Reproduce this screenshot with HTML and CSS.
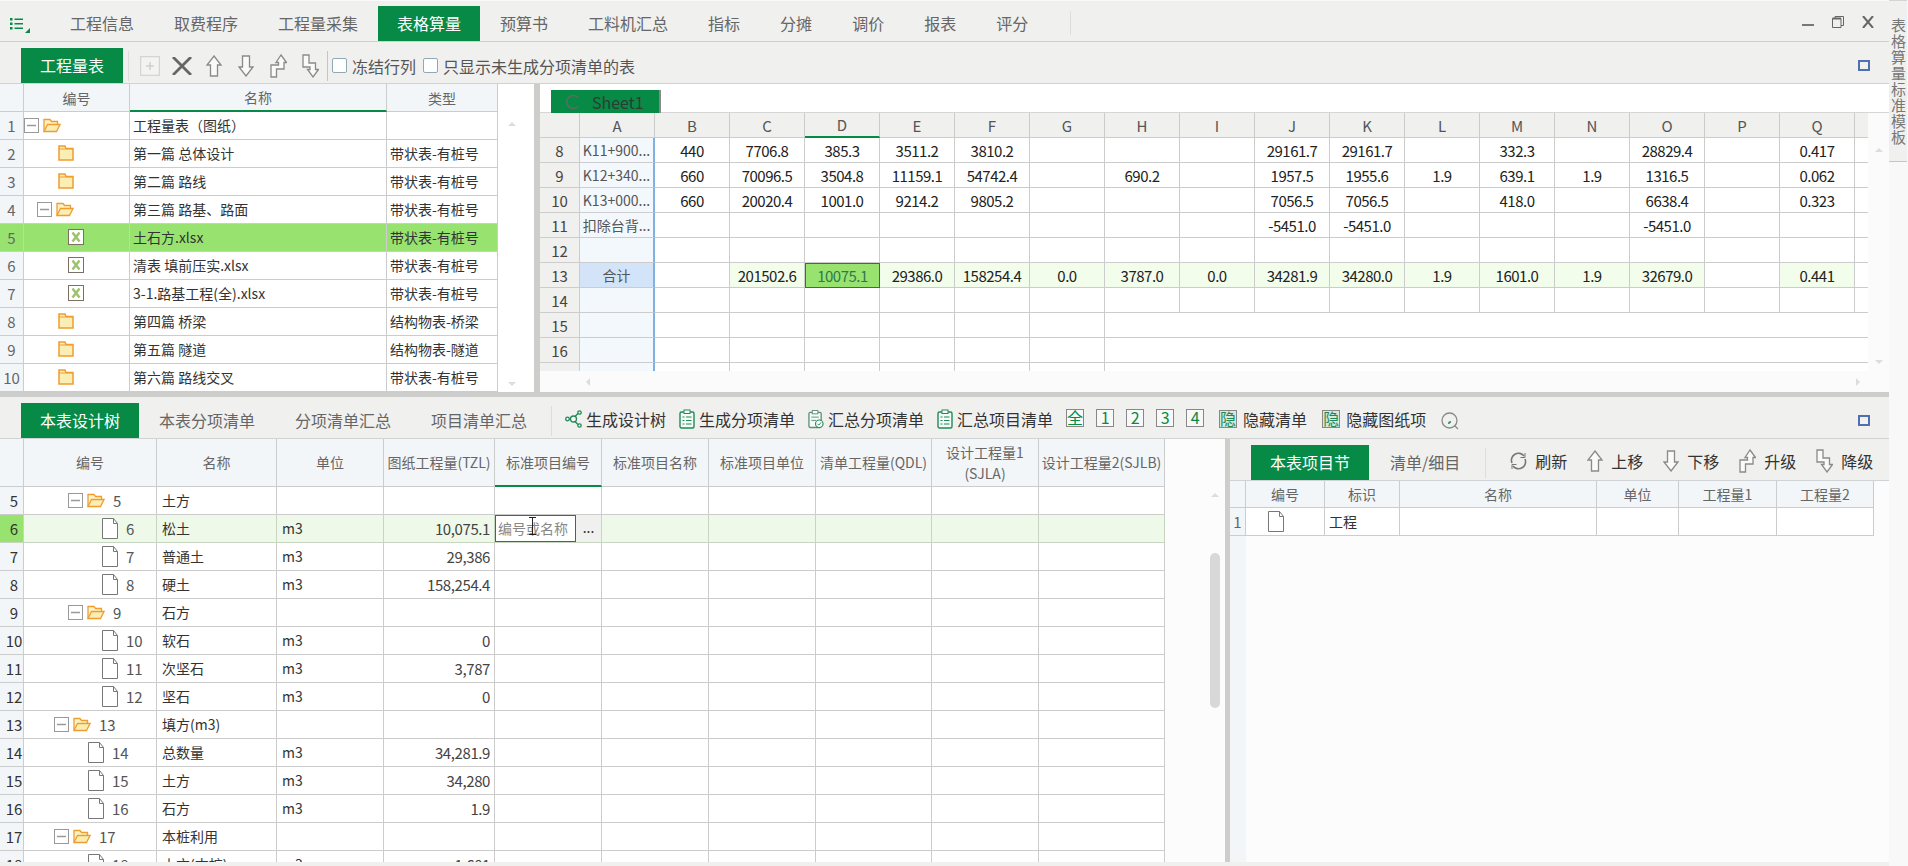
FILE: index.html
```html
<!DOCTYPE html>
<html lang="zh-CN">
<head>
    <meta charset="UTF-8">
    <title>表格算量</title>
    <link rel="stylesheet" href="styles.css">
</head>
<body>
<svg class="defs" width="0" height="0">
    <symbol id="minus" viewBox="0 0 15 15"><rect x=".5" y=".5" width="14" height="14" fill="#fff" stroke="#999"/><path d="M3 7.5h9" stroke="#999" stroke-width="1.5"/></symbol>
    <symbol id="open" viewBox="0 0 18 16"><path d="M1 14.5V2.5h6l1.500 2h6v3" fill="#fdf3c8" stroke="#ef9d2f" stroke-width="1.300"/><path d="M1 14.500l3.500-7H17l-3.500 7z" fill="#fbeeb5" stroke="#ef9d2f" stroke-width="1.300"/></symbol>
    <symbol id="closed" viewBox="0 0 16 16"><path d="M1 15V1h6l1 2.500h7V15z" fill="#fbeeb5" stroke="#ef9d2f" stroke-width="1.500"/><path d="M1 4h14" stroke="#ef9d2f"/></symbol>
    <symbol id="xl" viewBox="0 0 16 16"><rect x=".5" y=".5" width="15" height="15" fill="#fff" stroke="#7d6f66"/><path d="M4.500 3.500l7 9M11.500 3.500l-7 9" stroke="#9cc26a" stroke-width="2.400"/></symbol>
    <symbol id="doc" viewBox="0 0 16 21"><path d="M.5.500h11l4 5v15H.5z" fill="#fff" stroke="#777"/><path d="M11.500.500v5h4" fill="none" stroke="#777"/></symbol>
    <symbol id="up" viewBox="0 0 16 22"><path d="M8 1l7 9h-3.500v11h-7V10H1z" fill="#fafafa" stroke="#8a8a8a" stroke-width="1.300"/></symbol>
    <symbol id="down" viewBox="0 0 16 22"><path d="M8 21l7-9h-3.500V1h-7v11H1z" fill="#fafafa" stroke="#8a8a8a" stroke-width="1.300"/></symbol>
    <symbol id="rise" viewBox="0 0 17 24"><path d="M11 1l5.500 7.500H14V15H6.500v8H1V11h7.500V8.500H6z" fill="#fafafa" stroke="#8a8a8a" stroke-width="1.300"/></symbol>
    <symbol id="fall" viewBox="0 0 17 24"><path d="M1 1h6v8h6.500v6.500h3L11 23l-5.500-7.500H8V13H1z" fill="#fafafa" stroke="#8a8a8a" stroke-width="1.300"/></symbol>
    <symbol id="list" viewBox="0 0 16 20"><rect x="1" y="3" width="14" height="16" rx="1.500" fill="#f6faf7" stroke="#1f8a57" stroke-width="1.400"/><rect x="5" y="1" width="6" height="3.500" fill="#fff" stroke="#1f8a57"/><path d="M3.500 8h2M7 8h5.500M3.500 11.500h2M7 11.500h5.500M3.500 15h2M7 15h5.500" stroke="#1f8a57"/></symbol>
    <symbol id="sumlist" viewBox="0 0 17 20"><rect x="1" y="3" width="13" height="16" rx="1.500" fill="#f6faf7" stroke="#5d8f78" stroke-width="1.400"/><rect x="4.500" y="1" width="6" height="3.500" fill="#fff" stroke="#5d8f78"/><path d="M3.500 8h8M3.500 11.500h5" stroke="#5d8f78"/><circle cx="12" cy="15" r="4" fill="#fff" stroke="#1f8a57" stroke-width="1.200"/><path d="M10 15l1.500 1.500 2.500-3" fill="none" stroke="#1f8a57"/></symbol>
</svg>

<div class="app">
    <div class="main">
        <div class="topbar">
            <svg class="menu-icon" width="20" height="16" viewBox="0 0 20 16"><path d="M0 1h2.500v2.500H0zM0 5.500h2.500V8H0zM0 10h2.500v2.500H0zM4.500 1.500H13v1.500H4.500zM4.500 6H13v1.500H4.500zM4.500 10.500H13V12H4.500z" fill="#068a45"/><path d="M20 11v5h-5z" fill="#068a45"/></svg>
            <div class="tabs">
                <span class="tab">工程信息</span>
                <span class="tab">取费程序</span>
                <span class="tab">工程量采集</span>
                <span class="tab active">表格算量</span>
                <span class="tab">预算书</span>
                <span class="tab">工料机汇总</span>
                <span class="tab">指标</span>
                <span class="tab">分摊</span>
                <span class="tab">调价</span>
                <span class="tab">报表</span>
                <span class="tab">评分</span>
            </div>
            <span class="vline top-sep"></span>
            <div class="win">
                <svg width="12" height="12" viewBox="0 0 12 12"><path d="M0 9h12" stroke="#777" stroke-width="2"/></svg>
                <svg width="12" height="12" viewBox="0 0 12 12"><path d="M.5 2.500h8.500v9H.5zM3 2.500V.5h8.500v9H9" fill="none" stroke="#666"/><path d="M.5 2.500H9" stroke="#666" stroke-width="2"/></svg>
                <svg width="12" height="12" viewBox="0 0 12 12"><path d="M1 0l10 12M11 0L1 12" stroke="#666" stroke-width="2"/></svg>
            </div>
        </div>

        <div class="toolbar">
            <span class="tab active solo">工程量表</span>
            <span class="vline sep-a"></span>
            <svg class="ic-add" width="20" height="20" viewBox="0 0 20 20"><rect x=".5" y=".5" width="19" height="19" fill="#f3f3f2" stroke="#d4d4d4" stroke-width="1.500"/><path d="M10 6v8M6 10h8" stroke="#d0d0d0" stroke-width="1.500"/></svg>
            <svg class="ic-del" width="20" height="18" viewBox="0 0 20 18"><path d="M1 0l18 18M19 0L1 18" stroke="#666" stroke-width="2.800"/></svg>
            <svg class="ic-a" width="16" height="22"><use href="#up"/></svg>
            <svg class="ic-b" width="16" height="22"><use href="#down"/></svg>
            <svg class="ic-b" width="17" height="24"><use href="#rise"/></svg>
            <svg class="ic-c" width="17" height="24"><use href="#fall"/></svg>
            <span class="vline sep-b"></span>
            <label class="check first"><input type="checkbox">冻结行列</label>
            <label class="check"><input type="checkbox">只显示未生成分项清单的表</label>
            <span class="max-btn"></span>
        </div>

        <div class="upper">
            <div class="pane-list">
                <table class="grid list-grid">
                    <colgroup><col class="w24"><col class="w106"><col class="w257"><col class="w111"></colgroup>
                    <tr class="head"><th></th><th>编号</th><th class="sorted">名称</th><th>类型</th></tr>
                    <tr><td class="num">1</td><td><div class="node p1"><svg width="15" height="15"><use href="#minus"/></svg><svg width="18" height="16"><use href="#open"/></svg></div></td><td>工程量表（图纸）</td><td></td></tr>
                    <tr><td class="num">2</td><td><div class="node p35"><svg width="16" height="16"><use href="#closed"/></svg></div></td><td>第一篇 总体设计</td><td>带状表-有桩号</td></tr>
                    <tr><td class="num">3</td><td><div class="node p35"><svg width="16" height="16"><use href="#closed"/></svg></div></td><td>第二篇 路线</td><td>带状表-有桩号</td></tr>
                    <tr><td class="num">4</td><td><div class="node p14"><svg width="15" height="15"><use href="#minus"/></svg><svg width="18" height="16"><use href="#open"/></svg></div></td><td>第三篇 路基、路面</td><td>带状表-有桩号</td></tr>
                    <tr class="picked"><td class="num">5</td><td><div class="node p45"><svg width="16" height="16"><use href="#xl"/></svg></div></td><td>土石方.xlsx</td><td>带状表-有桩号</td></tr>
                    <tr><td class="num">6</td><td><div class="node p45"><svg width="16" height="16"><use href="#xl"/></svg></div></td><td>清表 填前压实.xlsx</td><td>带状表-有桩号</td></tr>
                    <tr><td class="num">7</td><td><div class="node p45"><svg width="16" height="16"><use href="#xl"/></svg></div></td><td>3-1.路基工程(全).xlsx</td><td>带状表-有桩号</td></tr>
                    <tr><td class="num">8</td><td><div class="node p35"><svg width="16" height="16"><use href="#closed"/></svg></div></td><td>第四篇 桥梁</td><td>结构物表-桥梁</td></tr>
                    <tr><td class="num">9</td><td><div class="node p35"><svg width="16" height="16"><use href="#closed"/></svg></div></td><td>第五篇 隧道</td><td>结构物表-隧道</td></tr>
                    <tr><td class="num">10</td><td><div class="node p35"><svg width="16" height="16"><use href="#closed"/></svg></div></td><td>第六篇 路线交叉</td><td>带状表-有桩号</td></tr>
                </table>
                <div class="vscroll list-scroll"><i class="arrow-up"></i><i class="arrow-down"></i></div>
            </div>

            <div class="pane-sheet">
                <div class="sheet-tabs">
                    <span class="sheet-tab"><svg width="14" height="16" viewBox="0 0 14 16"><path d="M12 3.500A6.500 6.500 0 1 0 12 12.500" fill="none" stroke="#5a6e62" stroke-width="1.500"/></svg>Sheet1</span>
                </div>
                <div class="sheet-body">
                    <div class="sheet-view">
                        <div class="sheet-clip">
                            <table class="grid sheet">
                                <colgroup><col class="w40"><col class="w75"><col class="w75"><col class="w75"><col class="w75"><col class="w75"><col class="w75"><col class="w75"><col class="w75"><col class="w75"><col class="w75"><col class="w75"><col class="w75"><col class="w75"><col class="w75"><col class="w75"><col class="w75"><col class="w75"><col class="w13"></colgroup>
                                <tr class="head"><th></th><th>A</th><th>B</th><th>C</th><th class="sorted">D</th><th>E</th><th>F</th><th>G</th><th>H</th><th>I</th><th>J</th><th>K</th><th>L</th><th>M</th><th>N</th><th>O</th><th>P</th><th>Q</th><th class="edge"></th></tr>
                                <tr><td class="num">8</td><td class="fix">K11+900...</td><td>440</td><td>7706.8</td><td>385.3</td><td>3511.2</td><td>3810.2</td><td></td><td></td><td></td><td>29161.7</td><td>29161.7</td><td></td><td>332.3</td><td></td><td>28829.4</td><td></td><td>0.417</td><td class="edge"></td></tr>
                                <tr><td class="num">9</td><td class="fix">K12+340...</td><td>660</td><td>70096.5</td><td>3504.8</td><td>11159.1</td><td>54742.4</td><td></td><td>690.2</td><td></td><td>1957.5</td><td>1955.6</td><td>1.9</td><td>639.1</td><td>1.9</td><td>1316.5</td><td></td><td>0.062</td><td class="edge"></td></tr>
                                <tr><td class="num">10</td><td class="fix">K13+000...</td><td>660</td><td>20020.4</td><td>1001.0</td><td>9214.2</td><td>9805.2</td><td></td><td></td><td></td><td>7056.5</td><td>7056.5</td><td></td><td>418.0</td><td></td><td>6638.4</td><td></td><td>0.323</td><td class="edge"></td></tr>
                                <tr><td class="num">11</td><td class="fix">扣除台背...</td><td></td><td></td><td></td><td></td><td></td><td></td><td></td><td></td><td>-5451.0</td><td>-5451.0</td><td></td><td></td><td></td><td>-5451.0</td><td></td><td></td><td class="edge"></td></tr>
                                <tr><td class="num">12</td><td class="fix"></td><td></td><td></td><td></td><td></td><td></td><td></td><td></td><td></td><td></td><td></td><td></td><td></td><td></td><td></td><td></td><td></td><td class="edge"></td></tr>
                                <tr class="total"><td class="num">13</td><td class="fix sum">合计</td><td class="blank"></td><td>201502.6</td><td class="cur">10075.1</td><td>29386.0</td><td>158254.4</td><td>0.0</td><td>3787.0</td><td>0.0</td><td>34281.9</td><td>34280.0</td><td>1.9</td><td>1601.0</td><td>1.9</td><td>32679.0</td><td class="blank"></td><td>0.441</td><td class="blank edge"></td></tr>
                                <tr><td class="num">14</td><td class="fix"></td><td></td><td></td><td></td><td></td><td></td><td></td><td></td><td></td><td></td><td></td><td></td><td></td><td></td><td></td><td></td><td></td><td class="edge"></td></tr>
                                <tr><td class="num">15</td><td class="fix"></td><td></td><td></td><td></td><td></td><td></td><td></td><td class="edge" colspan="11"></td></tr>
                                <tr><td class="num">16</td><td class="fix"></td><td></td><td></td><td></td><td></td><td></td><td></td><td class="edge" colspan="11"></td></tr>
                                <tr><td class="num"></td><td class="fix"></td><td></td><td></td><td></td><td></td><td></td><td></td><td class="edge" colspan="11"></td></tr>
                            </table>
                        </div>
                        <div class="hscroll"><i class="arrow-left"></i><i class="arrow-right"></i></div>
                    </div>
                    <div class="vscroll sheet-scroll"><i class="arrow-up"></i><i class="arrow-down"></i></div>
                </div>
            </div>
        </div>

        <div class="lower">
            <div class="toolbar lower-bar">
                <span class="tab active solo wide">本表设计树</span>
                <span class="tab">本表分项清单</span>
                <span class="tab">分项清单汇总</span>
                <span class="tab">项目清单汇总</span>
                <span class="vline sep-c"></span>
                <span class="tool"><svg width="17" height="18" viewBox="0 0 17 18"><g fill="#f6faf7" stroke="#1f8a57" stroke-width="1.300"><path d="M4 9h4M10 6.500l3-3M10 11.500l3 3" fill="none"/><circle cx="2.500" cy="9" r="1.800"/><circle cx="8.500" cy="9" r="3"/><circle cx="14.500" cy="2.500" r="1.700"/><circle cx="14.500" cy="15.500" r="1.700"/></g></svg>生成设计树</span>
                <span class="tool"><svg width="16" height="20"><use href="#list"/></svg>生成分项清单</span>
                <span class="tool"><svg width="16" height="20"><use href="#sumlist"/></svg>汇总分项清单</span>
                <span class="tool"><svg width="16" height="20"><use href="#list"/></svg>汇总项目清单</span>
                <span class="lvl first-lvl">全</span><span class="lvl">1</span><span class="lvl">2</span><span class="lvl">3</span><span class="lvl">4</span>
                <span class="tool hide-tool"><span class="lvl hid">隐</span>隐藏清单</span>
                <span class="tool hide-tool"><span class="lvl hid">隐</span>隐藏图纸项</span>
                <svg class="ic-find" width="18" height="18" viewBox="0 0 18 18"><circle cx="8.500" cy="8.500" r="7.500" fill="none" stroke="#8a8a8a" stroke-width="1.300"/><path d="M13.500 13.500l3.500 3.500" stroke="#8a8a8a" stroke-width="1.300"/><path d="M7 12c2 0 3-1 3-3-2 0-3 1-3 3z" fill="#1f8a57"/></svg>
                <span class="max-btn"></span>
            </div>
            <div class="lower-body">
                <div class="pane-tree">
                    <div class="tree-clip">
                        <table class="grid tree">
                            <colgroup><col class="w24"><col class="w133"><col class="w120"><col class="w107"><col class="w111"><col class="w107"><col class="w107"><col class="w107"><col class="w116"><col class="w107"><col class="w126"></colgroup>
                            <tr class="head tall"><th></th><th>编号</th><th>名称</th><th>单位</th><th>图纸工程量(TZL)</th><th class="sorted">标准项目编号</th><th>标准项目名称</th><th>标准项目单位</th><th>清单工程量(QDL)</th><th>设计工程量1<br>(SJLA)</th><th>设计工程量2(SJLB)</th></tr>
                            <tr><td class="num">5</td><td><div class="node p43"><svg width="15" height="15"><use href="#minus"/></svg><svg width="18" height="16"><use href="#open"/></svg><b>5</b></div></td><td>土方</td><td></td><td></td><td></td><td></td><td></td><td></td><td></td><td></td></tr>
                            <tr class="editing"><td class="num">6</td><td><div class="node p77"><svg width="16" height="21"><use href="#doc"/></svg><b>6</b></div></td><td>松土</td><td>m3</td><td class="val">10,075.1</td><td class="edit-cell"><div class="editor"><span class="placeholder">编号或名称</span><span class="dots">...</span><svg class="ibeam" width="7" height="18" viewBox="0 0 7 18"><path d="M0 .5h7M0 17.500h7M3.500 0v18" stroke="#222"/></svg></div></td><td></td><td></td><td></td><td></td><td></td></tr>
                            <tr><td class="num">7</td><td><div class="node p77"><svg width="16" height="21"><use href="#doc"/></svg><b>7</b></div></td><td>普通土</td><td>m3</td><td class="val">29,386</td><td></td><td></td><td></td><td></td><td></td><td></td></tr>
                            <tr><td class="num">8</td><td><div class="node p77"><svg width="16" height="21"><use href="#doc"/></svg><b>8</b></div></td><td>硬土</td><td>m3</td><td class="val">158,254.4</td><td></td><td></td><td></td><td></td><td></td><td></td></tr>
                            <tr><td class="num">9</td><td><div class="node p43"><svg width="15" height="15"><use href="#minus"/></svg><svg width="18" height="16"><use href="#open"/></svg><b>9</b></div></td><td>石方</td><td></td><td></td><td></td><td></td><td></td><td></td><td></td><td></td></tr>
                            <tr><td class="num">10</td><td><div class="node p77"><svg width="16" height="21"><use href="#doc"/></svg><b>10</b></div></td><td>软石</td><td>m3</td><td class="val">0</td><td></td><td></td><td></td><td></td><td></td><td></td></tr>
                            <tr><td class="num">11</td><td><div class="node p77"><svg width="16" height="21"><use href="#doc"/></svg><b>11</b></div></td><td>次坚石</td><td>m3</td><td class="val">3,787</td><td></td><td></td><td></td><td></td><td></td><td></td></tr>
                            <tr><td class="num">12</td><td><div class="node p77"><svg width="16" height="21"><use href="#doc"/></svg><b>12</b></div></td><td>坚石</td><td>m3</td><td class="val">0</td><td></td><td></td><td></td><td></td><td></td><td></td></tr>
                            <tr><td class="num">13</td><td><div class="node p29"><svg width="15" height="15"><use href="#minus"/></svg><svg width="18" height="16"><use href="#open"/></svg><b>13</b></div></td><td>填方(m3)</td><td></td><td></td><td></td><td></td><td></td><td></td><td></td><td></td></tr>
                            <tr><td class="num">14</td><td><div class="node p63"><svg width="16" height="21"><use href="#doc"/></svg><b>14</b></div></td><td>总数量</td><td>m3</td><td class="val">34,281.9</td><td></td><td></td><td></td><td></td><td></td><td></td></tr>
                            <tr><td class="num">15</td><td><div class="node p63"><svg width="16" height="21"><use href="#doc"/></svg><b>15</b></div></td><td>土方</td><td>m3</td><td class="val">34,280</td><td></td><td></td><td></td><td></td><td></td><td></td></tr>
                            <tr><td class="num">16</td><td><div class="node p63"><svg width="16" height="21"><use href="#doc"/></svg><b>16</b></div></td><td>石方</td><td>m3</td><td class="val">1.9</td><td></td><td></td><td></td><td></td><td></td><td></td></tr>
                            <tr><td class="num">17</td><td><div class="node p29"><svg width="15" height="15"><use href="#minus"/></svg><svg width="18" height="16"><use href="#open"/></svg><b>17</b></div></td><td>本桩利用</td><td></td><td></td><td></td><td></td><td></td><td></td><td></td><td></td></tr>
                            <tr><td class="num">18</td><td><div class="node p63"><svg width="16" height="21"><use href="#doc"/></svg><b>18</b></div></td><td>土方(本桩)</td><td>m3</td><td class="val">1,601</td><td></td><td></td><td></td><td></td><td></td><td></td></tr>
                        </table>
                    </div>
                    <div class="vscroll tree-scroll"><i class="arrow-up"></i><i class="thumb"></i></div>
                </div>
                <div class="pane-items">
                    <div class="toolbar items-bar">
                        <span class="tab active solo wide">本表项目节</span>
                        <span class="tab plain">清单/细目</span>
                        <span class="vline sep-d"></span>
                        <span class="tool wide-gap"><svg width="17" height="18" viewBox="0 0 17 18"><path d="M2 11A7 7 0 0 1 14 4M15 7a7 7 0 0 1-12 7" fill="none" stroke="#777" stroke-width="1.600"/><path d="M15 1v4.500h-4.500M2 17v-4.500h4.500" fill="none" stroke="#777"/></svg>刷新</span>
                        <span class="tool wide-gap"><svg width="16" height="22"><use href="#up"/></svg>上移</span>
                        <span class="tool wide-gap"><svg width="16" height="22"><use href="#down"/></svg>下移</span>
                        <span class="tool wide-gap"><svg width="17" height="24"><use href="#rise"/></svg>升级</span>
                        <span class="tool wide-gap"><svg width="17" height="24"><use href="#fall"/></svg>降级</span>
                    </div>
                    <table class="grid items">
                        <colgroup><col class="w16"><col class="w79"><col class="w75"><col class="w197"><col class="w82"><col class="w98"><col class="w97"></colgroup>
                        <tr class="head"><th></th><th>编号</th><th>标识</th><th>名称</th><th>单位</th><th>工程量1</th><th>工程量2</th></tr>
                        <tr><td class="num">1</td><td><div class="node p37"><svg width="16" height="21"><use href="#doc"/></svg></div></td><td>工程</td><td></td><td></td><td></td><td></td></tr>
                    </table>
                    <div class="items-fill"></div>
                </div>
            </div>
        </div>
    </div>
    <div class="side"><div class="side-tab">表格算量标准模板</div></div>
</div>
</body>
</html>
```

FILE: styles.css
```css
* {
    box-sizing: border-box;
}

html, body {
    margin: 0;
    padding: 0;
}

body {
    width: 1908px;
    height: 866px;
    overflow: hidden;
    font-family: "Noto Sans CJK SC", "Noto Sans", sans-serif;
    font-size: 14px;
    color: #333;
    background-color: #f0f0ee;
}

.defs {
    position: absolute;
}

.app {
    display: flex;
    height: 866px;
}

.main {
    width: 1889px;
    display: flex;
    flex-direction: column;
}

svg {
    flex: none;
    display: block;
}

/* top menu */
.topbar {
    height: 42px;
    display: flex;
    align-items: flex-end;
    border-bottom: 1px solid #cfcfcf;
    border-top: 1px solid #fafafa;
    padding-left: 10px;
}

.menu-icon {
    margin-bottom: 8px;
}

.tabs {
    display: flex;
    margin-left: 20px;
}

.tab {
    height: 35px;
    line-height: 34px;
    padding: 0 20px;
    font-size: 16px;
    color: #666;
    white-space: nowrap;
}

.tab.active {
    background-color: #068a45;
    color: #fff;
    padding: 0 19px;
}

.tab.solo {
    width: 102px;
}

.tab.wide {
    width: 118px;
    text-align: center;
    padding: 0;
}

.vline {
    width: 1px;
    background-color: #ddd;
    flex: none;
}

.top-sep {
    height: 24px;
    margin: 0 0 6px 22px;
}

.win {
    margin-left: auto;
    margin-right: 15px;
    margin-bottom: 13px;
    display: flex;
    gap: 18px;
}

/* toolbars */
.toolbar {
    height: 42px;
    flex: none;
    display: flex;
    align-items: flex-end;
    padding-left: 21px;
    border-bottom: 1px solid #cfd3d6;
}

.toolbar > svg, .toolbar > .vline, .toolbar > .check {
    align-self: center;
}

.toolbar > svg {
    margin-top: 6px;
}

.sep-a {
    height: 30px;
    margin: 6px 11px 0 5px;
}

.ic-del {
    margin-left: 12px;
}

.ic-a {
    margin-left: 14px;
}

.ic-b {
    margin-left: 16px;
}

.ic-c {
    margin-left: 15px;
}

.sep-b {
    height: 30px;
    margin: 6px 4px 0 8px;
    background-color: #b9c9d3;
}

.check {
    display: flex;
    align-items: center;
    gap: 5px;
    font-size: 16px;
    color: #555;
    margin-left: 7px;
    margin-top: 6px;
    white-space: nowrap;
}

.check.first {
    margin-left: 0;
}

.check input {
    appearance: none;
    width: 15px;
    height: 15px;
    margin: 0;
    background: #fff;
    border: 1px solid #8fa9b5;
    border-radius: 2px;
}

.max-btn {
    width: 12px;
    height: 11px;
    border: 2px solid #4f6fb0;
    margin-left: auto;
    margin-right: 19px;
    align-self: center;
    flex: none;
    margin-top: 6px;
}

/* tables */
.grid {
    border-collapse: separate;
    border-spacing: 0;
    table-layout: fixed;
    background-color: #fff;
}

.grid th, .grid td {
    height: 28px;
    padding: 0 4px 1px;
    border-right: 1px solid #ccc;
    border-bottom: 1px solid #ccc;
    font-weight: normal;
    white-space: nowrap;
    overflow: hidden;
}

.grid th {
    background-color: #f3f6f9;
    color: #666;
    text-align: center;
    padding: 0;
}

.grid th.sorted {
    border-bottom: 2px solid #068a45;
}

.grid td.num {
    background-color: #f3f6f9;
    color: #666;
    text-align: center;
    font-size: 15px;
    padding: 0;
}

.w13 { width: 13px; }
.w16 { width: 16px; }
.w24 { width: 24px; }
.w40 { width: 40px; }
.w75 { width: 75px; }
.w79 { width: 79px; }
.w82 { width: 82px; }
.w97 { width: 97px; }
.w98 { width: 98px; }
.w106 { width: 106px; }
.w107 { width: 107px; }
.w111 { width: 111px; }
.w116 { width: 116px; }
.w120 { width: 120px; }
.w126 { width: 126px; }
.w133 { width: 133px; }
.w197 { width: 197px; }
.w257 { width: 257px; }

.node {
    display: flex;
    align-items: center;
    gap: 4px;
    margin: 0 -4px;
}

.node b {
    font-weight: normal;
    font-size: 15px;
    color: #555;
    margin-left: 4px;
}

.p1 { padding-left: 1px; }
.p14 { padding-left: 14px; }
.p29 { padding-left: 29px; }
.p35 { padding-left: 35px; }
.p37 { padding-left: 22px; }
.p43 { padding-left: 43px; }
.p45 { padding-left: 45px; }
.p63 { padding-left: 63px; }
.p77 { padding-left: 77px; }

/* upper half */
.upper {
    height: 308px;
    flex: none;
    display: flex;
    background-color: #cdcecc;
}

.pane-list {
    width: 534px;
    flex: none;
    display: flex;
    background-color: #fff;
}

.list-grid {
    width: 498px;
}

.list-grid td {
    padding-left: 3px;
}

.picked td, .grid .picked td.num {
    background-color: #98e370;
}

.vscroll {
    flex: none;
    display: flex;
    flex-direction: column;
    align-items: center;
    justify-content: space-between;
}

.list-scroll {
    width: 36px;
    padding: 38px 8px 6px 0;
}

.sheet-scroll {
    width: 21px;
    height: 279px;
    padding: 35px 0 28px;
    background-color: #fbfbfb;
}

.arrow-up, .arrow-down, .arrow-left, .arrow-right {
    display: block;
    width: 0;
    height: 0;
    border: 4px solid transparent;
}

.arrow-up {
    border-top: 0;
    border-bottom: 4px solid #ddd;
}

.arrow-down {
    border-bottom: 0;
    border-top: 4px solid #ddd;
}

.arrow-left {
    border-left: 0;
    border-right: 4px solid #ddd;
}

.arrow-right {
    border-right: 0;
    border-left: 4px solid #ddd;
}

.pane-sheet {
    margin-left: 6px;
    flex: 1;
    min-width: 0;
    background-color: #fff;
    display: flex;
    flex-direction: column;
}

.sheet-tabs {
    height: 29px;
    flex: none;
    padding: 6px 0 0 11px;
    border-bottom: 1px solid #d6d6d6;
}

.sheet-tab {
    width: 110px;
    height: 23px;
    background-color: #068a45;
    border-right: 2px solid #888;
    color: #2e3b33;
    font-size: 16px;
    display: flex;
    align-items: center;
    gap: 12px;
    padding-left: 15px;
    line-height: 22px;
}

.sheet-body {
    display: flex;
    flex: 1;
    min-height: 0;
}

.sheet-view {
    width: 1328px;
    flex: none;
    display: flex;
    flex-direction: column;
}

.sheet-clip {
    height: 258px;
    flex: none;
    overflow: hidden;
}

.sheet {
    width: 1328px;
    color: #222;
}

.grid.sheet th, .grid.sheet td {
    height: 25px;
    text-align: center;
    padding: 0;
    font-size: 15px;
    letter-spacing: -.5px;
}

.grid.sheet th {
    background-color: #f0f0ee;
    color: #555;
    letter-spacing: 0;
}

.grid.sheet .edge {
    border-right: 0;
}

.grid.sheet td.num {
    background-color: #f0f0ee;
    color: #444;
    letter-spacing: 0;
}

.grid.sheet td.fix {
    background-color: #f3f8fc;
    border-right: 2px solid #7fb2e0;
    color: #555;
    font-size: 14px;
    letter-spacing: 0;
}

.grid.sheet td.sum {
    background-color: #d3e4f9;
}

.total td {
    background-color: #f3fdec;
}

.grid.sheet td.blank {
    background-color: #fff;
}

.grid.sheet td.cur {
    background-color: #98e370;
    border: 1px solid #068a45;
    color: #2f7a4a;
}

.hscroll {
    flex: 1;
    display: flex;
    align-items: center;
    justify-content: space-between;
    padding: 0 8px 0 46px;
    background-color: #fbfbfb;
}

/* lower half */
.lower {
    flex: 1;
    min-height: 0;
    display: flex;
    flex-direction: column;
    border-top: 5px solid #cdcecc;
}

.sep-c {
    height: 30px;
    margin: 6px 0 0 4px;
}

.tool {
    display: flex;
    align-items: center;
    gap: 4px;
    margin-left: 13px;
    height: 38px;
    font-size: 16px;
    color: #333;
    white-space: nowrap;
}

.lvl {
    width: 18px;
    height: 18px;
    line-height: 15px;
    margin: 0 0 11px 12px;
    flex: none;
    text-align: center;
    border: 1px solid #888;
    background-color: #f8f8f8;
    color: #068a45;
    font-size: 16px;
}

.first-lvl {
    margin-left: 13px;
}

.hide-tool {
    margin-left: 15px;
    gap: 6px;
}

.lvl.hid {
    margin: 0;
    background-color: #d9e8dc;
    color: #1f8a57;
}

.ic-find {
    margin-left: 15px;
    margin-top: 4px;
}

.lower-body {
    height: 423px;
    flex: none;
    display: flex;
    background-color: #cdcecc;
}

.pane-tree {
    width: 1225px;
    flex: none;
    height: 423px;
    display: flex;
    background-color: #fcfcfc;
}

.tree-clip {
    width: 1165px;
    height: 423px;
    flex: none;
    overflow: hidden;
}

.tree {
    width: 1165px;
}

.grid .tall th {
    height: 48px;
    line-height: 21px;
    font-size: 14px;
}

.grid.tree td {
    padding-left: 5px;
    color: #333;
}

.grid.tree td.val {
    padding: 0 4px 1px 0;
    text-align: right;
    color: #444;
    font-size: 15px;
    letter-spacing: -.4px;
}

.editing td {
    background-color: #eff9e9;
    border-bottom-color: #c6d6c0;
    border-right-color: #c6d6c0;
}

.grid .editing td.num {
    background-color: #98e370;
}

.grid.tree td.edit-cell {
    padding: 0;
    background-color: #f0f0ee;
}

.editor {
    position: relative;
    display: flex;
    height: 27px;
}

.placeholder {
    width: 81px;
    background-color: #fff;
    border: 1px solid #068a45;
    color: #888;
    line-height: 24px;
    padding-left: 2px;
    overflow: hidden;
}

.dots {
    flex: 1;
    text-align: center;
    line-height: 24px;
}

.ibeam {
    position: absolute;
    left: 34px;
    top: 2px;
}

.tree-scroll {
    width: 60px;
    align-items: flex-start;
    justify-content: flex-start;
    padding: 54px 0 0 45px;
}

.tree-scroll .arrow-up {
    margin-left: 1px;
}

.thumb {
    display: block;
    width: 10px;
    height: 155px;
    margin-top: 56px;
    background-color: #d8d8d8;
    border-radius: 5px;
}

.pane-items {
    flex: 1;
    margin-left: 5px;
    display: flex;
    flex-direction: column;
    height: 423px;
    background-color: #fcfcfc;
}

.items-bar {
    background-color: #f0f0ee;
    align-items: flex-end;
}

.tab.plain {
    padding: 0 0 0 21px;
}

.sep-d {
    height: 30px;
    margin: 6px 0 0 25px;
}

.wide-gap {
    margin-left: 20px;
    gap: 8px;
}

.sep-d + .wide-gap {
    margin-left: 24px;
}

.items {
    width: 644px;
}

.grid.items th {
    height: 27px;
}

.items-fill {
    flex: 1;
    border-left: 16px solid #f3f6f9;
}

/* right side strip */
.side {
    width: 19px;
    background-color: #f8f8f8;
}

.side-tab {
    height: 162px;
    padding: 17px 0 0 1px;
    background-color: #f0f0ee;
    border-top: 1px solid #d5d5d5;
    border-bottom: 1px solid #b8c8d8;
    writing-mode: vertical-rl;
    font-size: 15px;
    line-height: 17px;
    letter-spacing: 1px;
    color: #777;
}
```
